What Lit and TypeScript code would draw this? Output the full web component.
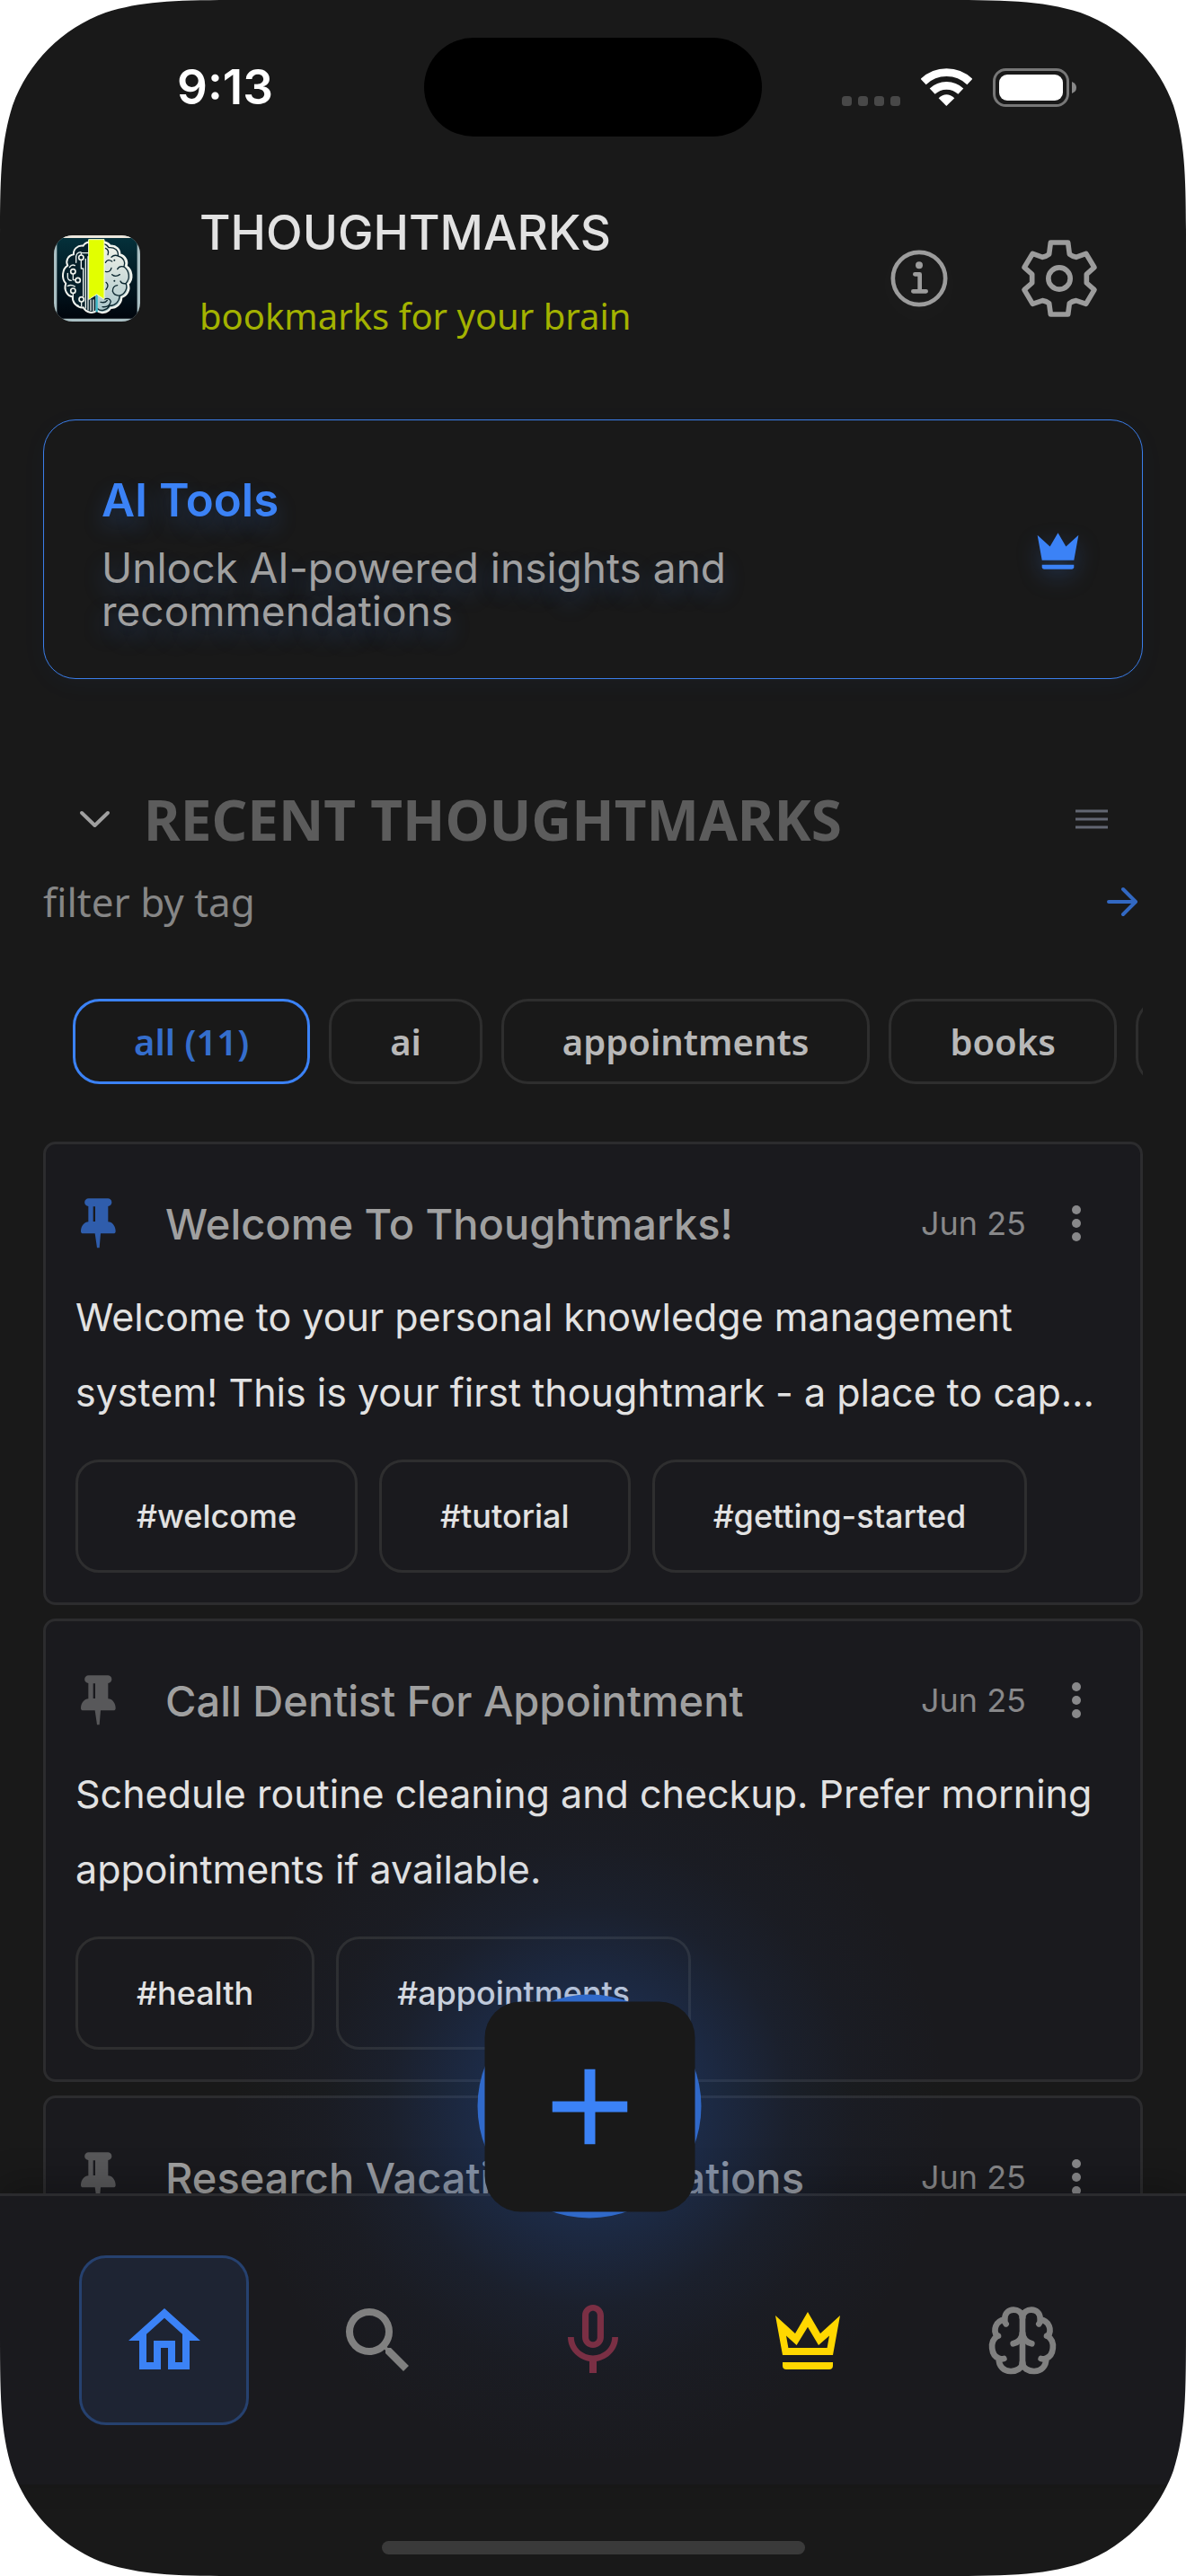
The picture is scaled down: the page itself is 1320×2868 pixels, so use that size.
import { LitElement, html, css, svg, nothing } from "lit";
import { customElement, property, state } from "lit/decorators.js";
import { classMap } from "lit/directives/class-map.js";

interface Thoughtmark {
  title: string;
  date: string;
  pinned: boolean;
  body?: string;
  tags?: string[];
}

const MARKS: Thoughtmark[] = [
  {
    title: "Welcome To Thoughtmarks!",
    date: "Jun 25",
    pinned: true,
    body: "Welcome to your personal knowledge management system! This is your first thoughtmark - a place to cap…",
    tags: ["#welcome", "#tutorial", "#getting-started"],
  },
  {
    title: "Call Dentist For Appointment",
    date: "Jun 25",
    pinned: false,
    body: "Schedule routine cleaning and checkup. Prefer morning appointments if available.",
    tags: ["#health", "#appointments"],
  },
  { title: "Research Vacation Destinations", date: "Jun 25", pinned: false },
];

const FILTERS = ["all (11)", "ai", "appointments", "books"];

const CROWN_BASE = svg`<path d="M19 19C19 19.6 18.6 20 18 20H6C5.4 20 5 19.6 5 19V18H19Z"/>`;

const NAV = [
  {
    id: "home",
    label: "Home",
    icon: svg`<path d="M12 5.69l5 4.5V18h-2v-6H9v6H7v-7.81l5-4.5M12 3L2 12h3v8h6v-6h2v6h6v-8h3L12 3z"/>`,
  },
  {
    id: "search",
    label: "Search",
    icon: svg`<path d="M15.5 14h-.79l-.28-.27A6.471 6.471 0 0 0 16 9.5 6.5 6.5 0 1 0 9.5 16c1.61 0 3.09-.59 4.23-1.57l.27.28v.79l5 4.99L20.49 19l-4.99-5zm-6 0C7.01 14 5 11.99 5 9.5S7.01 5 9.5 5 14 7.01 14 9.5 11.99 14 9.5 14z"/>`,
  },
  {
    id: "voice",
    label: "Voice",
    icon: svg`<path transform="translate(0 -1)" d="M12 15c1.66 0 2.99-1.34 2.99-3L15 6c0-1.66-1.34-3-3-3S9 4.34 9 6v6c0 1.66 1.34 3 3 3zm-1.2-9.1c0-.66.54-1.2 1.2-1.2.66 0 1.2.54 1.2 1.2l-.01 6.2c0 .66-.53 1.2-1.19 1.2-.66 0-1.2-.54-1.2-1.2V5.9zm6.5 6.1c0 3-2.54 5.1-5.3 5.1S6.7 15 6.7 12H5c0 3.41 2.72 6.23 6 6.72V22h2v-3.28c3.28-.48 6-3.3 6-6.72h-1.7z"/>`,
  },
  {
    id: "premium",
    label: "Premium",
    icon: svg`<path fill-rule="evenodd" d="M5 16L3 5L8.5 10L12 4L15.5 10L21 5L19 16ZM6 10.6L6.6 14H17.4L18 10.6L15 13.25L12 8.2L8.9 13.25Z"/>${CROWN_BASE}`,
  },
  {
    id: "brain",
    label: "Brain",
    icon: svg`<g transform="translate(12 12) scale(.0833) translate(-893 -197)" fill="none" stroke="currentColor" stroke-width="20" stroke-linecap="round" stroke-linejoin="round">
      <path d="M893 120V275"/>
      <path d="M893 120C890 85 834 84 834 124C834 132 833 136 838 141M834 126C802 132 794 162 808 182L812 181M808 182C782 200 788 246 814 256Q824 260 831 257M814 256C812 314 893 308 893 270M862 207Q890 200 893 172"/>
      <path transform="translate(1786 0) scale(-1 1)" d="M893 120C890 85 834 84 834 124C834 132 833 136 838 141M834 126C802 132 794 162 808 182L812 181M808 182C782 200 788 246 814 256Q824 260 831 257M814 256C812 314 893 308 893 270M862 207Q890 200 893 172"/>
    </g>`,
  },
];

@customElement("thought-card")
export class ThoughtCard extends LitElement {
  @property({ attribute: false }) mark!: Thoughtmark;

  static styles = css`
    :host {
      display: block;
      flex: none;
      box-sizing: border-box;
      border: 3px solid #2c2c2e;
      border-radius: 14px;
      background: #1a1a1e;
      padding: 33px;
      font-family: Inter, "Liberation Sans", sans-serif;
      color: #e2e2e2;
    }
    button {
      border: 0;
      padding: 0;
      background: none;
      display: grid;
      place-items: center;
      cursor: pointer;
    }
    .head {
      display: flex;
      align-items: center;
      height: 110px;
    }
    .pin {
      width: 51px;
      margin-right: 49px;
      color: #58585a;
    }
    .pin.on {
      color: #2f5dac;
    }
    h3 {
      flex: 1;
      margin: 0;
      font-size: 47px;
      font-weight: 500;
      color: #a0a0a0;
      white-space: nowrap;
    }
    time {
      font-size: 36px;
      color: #88888a;
    }
    .more {
      width: 76px;
      height: 76px;
      margin-left: 18px;
      color: #88888a;
    }
    p {
      margin: 7px 0 33px;
      font-size: 43px;
      line-height: 84px;
    }
    ul {
      display: flex;
      gap: 24px;
      margin: 0;
      padding: 0;
      list-style: none;
    }
    li {
      border: 3px solid #2e2e2f;
      border-radius: 26px;
      padding: 35px 65px;
      font-size: 36px;
      font-weight: 500;
      line-height: 50px;
    }
  `;

  render() {
    const { title, date, pinned, body, tags } = this.mark;
    return html`
      <div class="head">
        <button class=${classMap({ pin: true, on: pinned })} aria-label="Pin">
          <svg width="39" height="56" viewBox="90 76 117 168" fill="currentColor">
            <path
              d="M116 77H179A13 13 0 0 1 181 103V155C195 155 206 170 206 186Q206 194 198 194H156L152 242H144L137 194H98Q90 194 90 186C90 168 103 155 115 155V103A13 13 0 0 1 116 77ZM131 104V154H138V104Z"
              fill-rule="evenodd"
            />
          </svg>
        </button>
        <h3>${title}</h3>
        <time>${date}</time>
        <button class="more" aria-label="More">
          <svg width="12" height="42" viewBox="0 0 12 42" fill="currentColor">
            <circle cx="6" cy="6" r="5" />
            <circle cx="6" cy="21" r="5" />
            <circle cx="6" cy="36" r="5" />
          </svg>
        </button>
      </div>
      ${body ? html`<p>${body}</p>` : nothing}
      ${tags ? html`<ul>${tags.map((t) => html`<li>${t}</li>`)}</ul>` : nothing}
    `;
  }
}

@customElement("app-root")
export class AppRoot extends LitElement {
  @state() private tab = "home";
  @state() private filter = FILTERS[0];

  static styles = css`
    :host {
      display: block;
      font-family: Inter, "Liberation Sans", sans-serif;
    }
    button {
      border: 0;
      padding: 0;
      background: none;
      font: inherit;
      color: inherit;
      display: grid;
      place-items: center;
      cursor: pointer;
    }
    .screen {
      position: relative;
      display: flex;
      flex-direction: column;
      height: 100vh;
      overflow: hidden;
      background: #191919;
    }
    .corner {
      position: absolute;
      z-index: 5;
      fill: #fff;
      pointer-events: none;
    }
    .tl { top: 0; left: 0; }
    .tr { top: 0; right: 0; transform: scaleX(-1); }
    .bl { bottom: 0; left: 0; transform: scaleY(-1); }
    .br { bottom: 0; right: 0; transform: scale(-1); }

    .status {
      flex: none;
      display: grid;
      grid-template-columns: minmax(0, 275fr) auto minmax(0, 350fr);
      align-items: center;
      padding: 42px 122px 0 197px;
      color: #fff;
    }
    .clock {
      font-size: 53px;
      font-weight: 600;
    }
    .island {
      width: 376px;
      height: 110px;
      border-radius: 55px;
      background: #000;
    }
    .signals {
      display: flex;
      justify-content: flex-end;
      gap: 23px;
    }

    .brand {
      flex: none;
      display: flex;
      align-items: center;
      padding: 77px 93px 76px 60px;
      color: #9c9c9c;
    }
    .names {
      flex: 1;
      display: flex;
      flex-direction: column;
      gap: 24px;
      margin-left: 66px;
    }
    h1 {
      margin: 0;
      font-size: 53px;
      font-weight: 500;
      line-height: 60px;
      color: #e2e2e2;
    }
    .tagline {
      font-family: "Noto Sans", sans-serif;
      font-size: 40px;
      line-height: 78px;
      color: #a3b200;
    }
    .brand button {
      width: 96px;
      height: 96px;
    }
    .actions {
      display: flex;
      gap: 60px;
    }
    .about {
      filter: drop-shadow(0 6px 16px rgba(255, 255, 255, 0.06));
    }

    .ai {
      flex: none;
      display: flex;
      align-items: center;
      justify-content: space-between;
      margin: 0 48px;
      padding: 55px 63px 51px 64px;
      border: 1px solid #3b7eea;
      border-radius: 36px;
      box-shadow: 0 6px 30px rgba(59, 130, 246, 0.04);
      color: #3b82f6;
      text-decoration: none;
    }
    .ai h2 {
      margin: 0 0 17px;
      font-size: 51px;
      font-weight: 600;
      line-height: 68px;
      text-shadow: 0 12px 24px rgba(59, 130, 246, 0.25);
    }
    .ai p {
      margin: 0;
      font-size: 46px;
      line-height: 48px;
      color: #a0a0a0;
      text-shadow: 0 12px 24px rgba(59, 130, 246, 0.25);
    }
    .ai svg {
      flex: none;
      filter: drop-shadow(0 8px 12px rgba(59, 130, 246, 0.25));
    }

    .section {
      flex: none;
      display: flex;
      align-items: center;
      gap: 34px;
      margin-top: 116px;
      padding: 0 87px 0 85px;
      color: #a0a0a0;
    }
    .section h2 {
      flex: 1;
      margin: 0;
      font-family: "Noto Sans", sans-serif;
      font-size: 62px;
      font-weight: 700;
      line-height: 80px;
      color: #5c5c5c;
    }
    .list-toggle {
      color: #626672;
    }
    .filter {
      flex: none;
      display: flex;
      align-items: center;
      justify-content: space-between;
      margin-top: 22px;
      padding: 0 51px 0 48px;
      font-family: "Noto Sans", sans-serif;
      font-size: 44px;
      line-height: 60px;
      color: #868686;
    }
    .filter button {
      color: #3268c2;
    }
    .chips {
      flex: none;
      display: flex;
      gap: 21px;
      margin: 78px 48px 64px;
      padding-left: 33px;
      overflow: hidden;
      font-family: "Noto Sans", sans-serif;
      font-size: 40px;
      font-weight: 600;
      line-height: 55px;
      color: #b8b8b8;
    }
    .chips button {
      flex: none;
      border: 3px solid #2e2e2e;
      border-radius: 30px;
      padding: 17px 65px;
    }
    .chips .on {
      border-color: #3b82f6;
      color: #356ecd;
    }
    .cards {
      flex: 1;
      min-height: 0;
      overflow: hidden;
      display: flex;
      flex-direction: column;
      gap: 15px;
      padding: 0 48px;
    }

    .dock {
      flex: none;
      position: relative;
      border-top: 3px solid #2b2b2e;
      background: #1a1a1e;
      box-shadow: 0 -12px 36px rgba(0, 0, 0, 0.22);
    }
    .tabs {
      position: relative;
      z-index: 2;
      display: flex;
      justify-content: space-between;
      padding: 66px 88px;
      color: #808080;
    }
    .tabs button {
      box-sizing: border-box;
      width: 189px;
      height: 189px;
      border: 3px solid transparent;
      border-radius: 30px;
    }
    .tabs .on {
      border-color: #26416f;
      background: #1e2433;
      color: #3b82f6;
    }
    .voice {
      color: #7a2f44;
    }
    .premium {
      color: #ffd700;
    }
    .glow {
      position: absolute;
      top: -100px;
      left: calc(50% - 4px);
      width: 800px;
      height: 800px;
      transform: translate(-50%, -50%);
      pointer-events: none;
      background: radial-gradient(
        circle closest-side,
        rgba(35, 92, 190, 0.26) 30%,
        rgba(35, 92, 190, 0.18) 42%,
        rgba(35, 92, 190, 0.09) 56%,
        rgba(35, 92, 190, 0.03) 74%,
        rgba(35, 92, 190, 0) 100%
      );
    }
    .add {
      position: absolute;
      z-index: 3;
      top: -100px;
      left: calc(50% - 4px);
      width: 249px;
      height: 249px;
      transform: translate(-50%, -50%);
      border-radius: 50%;
      background: #3069c9;
      color: #3b82f6;
    }
    .tile {
      display: grid;
      place-items: center;
      width: 234px;
      height: 234px;
      border-radius: 40px;
      background: #191919;
    }
    .indicator {
      flex: none;
      padding: 63px 0 24px;
    }
    .bar {
      width: 471px;
      height: 15px;
      margin: 0 auto;
      border-radius: 8px;
      background: #3a3a3a;
    }
  `;

  private corner(where: string) {
    return html`<svg class="corner ${where}" width="284" height="284" viewBox="0 0 284 284">
      <path d="M0 0H284C202 0 162 0 117.5 14C69.3 31.4 31.4 69.3 14 117.5C0 162 0 202 0 284Z" />
    </svg>`;
  }

  private logo() {
    return html`<svg width="96" height="96" viewBox="60 69 288 288" role="img" aria-label="Thoughtmarks">
      <defs>
        <clipPath id="tile"><rect x="60" y="69" width="288" height="288" rx="62" /></clipPath>
        <linearGradient id="sea" x1="0" y1="0" x2="0" y2="1">
          <stop offset="0" stop-color="#04303a" />
          <stop offset=".6" stop-color="#021620" />
          <stop offset="1" stop-color="#00050c" />
        </linearGradient>
        <linearGradient id="cloud" x1="0" y1="0" x2="0" y2="1">
          <stop offset="0" stop-color="#f4f4ea" />
          <stop offset="1" stop-color="#a9c6ca" />
        </linearGradient>
      </defs>
      <g clip-path="url(#tile)" fill="none" stroke-linecap="round" stroke-linejoin="round">
        <rect x="60" y="69" width="288" height="288" fill="#a9bfc3" />
        <rect x="60" y="69" width="288" height="9" fill="#ece6dc" />
        <rect x="70" y="78" width="268" height="269" rx="14" fill="url(#sea)" />
        <path
          d="M203 96C190 88 165 90 158 104C138 102 124 116 126 133C106 136 98 156 106 170C88 180 84 214 100 230C92 250 104 272 122 274C122 296 140 312 158 310C168 328 192 332 203 320Z"
          fill="#06202a" stroke="#f2f4ee" stroke-width="6"
        />
        <path
          d="M203 96C216 86 240 90 248 104C268 102 282 116 280 133C300 138 308 156 302 172C322 184 326 216 308 232C316 250 304 272 286 276C286 298 268 312 250 312C238 330 214 332 203 320Z"
          fill="url(#cloud)" stroke="#f2f4ee" stroke-width="6"
        />
        <path
          d="M203 102C216 92 236 96 243 110C264 108 276 120 274 138C294 144 300 160 294 174C312 188 316 212 300 230C308 246 296 266 280 270C278 292 264 304 246 304C236 320 216 324 206 314M232 112Q246 118 240 134M274 138Q262 132 252 142M232 160Q240 146 254 156M294 174Q278 170 272 182M232 190Q248 194 252 178M280 200Q266 210 254 200M300 230Q286 232 282 222M234 226Q246 236 234 250M280 270Q262 272 256 256Q256 238 272 236M216 292Q232 296 238 286M222 308Q246 310 250 290Q246 276 228 282"
          stroke="#0b2730" stroke-width="4"
        />
        <circle cx="262" cy="152" r="3" fill="#0b2730" />
        <circle cx="262" cy="221" r="3" fill="#0b2730" />
        <path
          d="M151 152V180H158V272M151 134V128H174M134 160V140Q136 126 150 125M124 199V218H132M106 196V208Q106 220 118 220M124 262V286Q126 300 142 304M152 292V306M166 148V312M174 140V318M183 285V320M192 285V322M106 238Q118 232 130 240M112 176Q120 164 130 170"
          stroke="#e8efec" stroke-width="4"
        />
        <g stroke="#f2f4ee" stroke-width="5" fill="#06202a">
          <circle cx="151" cy="143" r="8" />
          <circle cx="124" cy="190" r="8" />
          <circle cx="140" cy="219" r="8" />
          <circle cx="124" cy="254" r="8" />
          <circle cx="152" cy="283" r="8" />
        </g>
        <path d="M203 270V322" stroke="#36b5c6" stroke-width="7" />
        <path d="M177 83H228V283L203 266L177 283Z" fill="#e2ff00" stroke="#f8ffd8" stroke-width="3" />
      </g>
    </svg>`;
  }

  render() {
    return html`
      <div class="screen">
        ${["tl", "tr", "bl", "br"].map((c) => this.corner(c))}

        <div class="status">
          <span class="clock">9:13</span>
          <span class="island"></span>
          <span class="signals">
            <svg width="65" height="43" viewBox="0 0 65 43" fill="#484848">
              ${[0, 18, 36, 54].map((x) => svg`<rect x=${x} y="31" width="11" height="11" rx="3.5"/>`)}
            </svg>
            <svg width="57" height="43" viewBox="375 105 171 129" fill="none" stroke="#fff" stroke-width="26">
              <path d="M383 150A112 112 0 0 1 538 150" />
              <path d="M413 182A69 69 0 0 1 508 182" />
              <path d="M460 231L434 205Q460 181 487 205Z" fill="#fff" stroke="none" />
            </svg>
            <svg width="93" height="43" viewBox="0 0 93 43">
              <rect x="1.5" y="1.5" width="82" height="40" rx="13" fill="none" stroke="#777" stroke-width="3" />
              <rect x="7" y="7" width="71" height="29" rx="9" fill="#fff" />
              <path d="M88 15Q93 17 93 21.500T88 28Z" fill="#888" />
            </svg>
          </span>
        </div>

        <header class="brand">
          ${this.logo()}
          <div class="names">
            <h1>THOUGHTMARKS</h1>
            <div class="tagline">bookmarks for your brain</div>
          </div>
          <div class="actions">
            <button class="about" aria-label="About">
              <svg width="64" height="64" viewBox="274 715 192 192" fill="none" stroke="currentColor" stroke-width="14" stroke-linecap="round" stroke-linejoin="round">
                <circle cx="370" cy="811" r="87.500" />
                <circle cx="370" cy="767" r="12" fill="currentColor" stroke="none" />
                <path d="M356 797H372V854M350 854H393" />
              </svg>
            </button>
            <button aria-label="Settings">
              <svg width="86" height="86" viewBox="708 683 258 258" fill="none" stroke="currentColor" stroke-width="17" stroke-linejoin="round">
                <path d="M808 692H866L871 731Q880 738 893 741L926 729L954 775L928 798V827L954 850L926 897L893 886Q880 888 871 895L866 932H808L803 895Q794 888 781 886L748 897L720 850L746 827V798L720 775L748 729L781 741Q794 738 803 731Z" />
                <circle cx="837" cy="812" r="36.500" />
              </svg>
            </button>
          </div>
        </header>

        <a class="ai" href="#ai-tools">
          <div>
            <h2>AI Tools</h2>
            <p>Unlock AI-powered insights and recommendations</p>
          </div>
          <svg width="61" height="61" viewBox="0 0 24 24" fill="currentColor">
            <path d="M5 16L3 5L8.5 10L12 4L15.5 10L21 5L19 16Z" />
            ${CROWN_BASE}
          </svg>
        </a>

        <div class="section">
          <button aria-label="Collapse">
            <svg width="41" height="24" viewBox="0 0 41 24" fill="none" stroke="currentColor" stroke-width="4" stroke-linecap="round" stroke-linejoin="round">
              <path d="M6 5L20.500 19L35 5" />
            </svg>
          </button>
          <h2>RECENT THOUGHTMARKS</h2>
          <button class="list-toggle" aria-label="List view">
            <svg width="36" height="24" viewBox="0 0 36 24" fill="currentColor">
              <path d="M0 1.500H36V4.500H0ZM0 10.500H36V13.500H0ZM0 19.500H36V22.500H0Z" />
            </svg>
          </button>
        </div>

        <div class="filter">
          <span>filter by tag</span>
          <button aria-label="All tags">
            <svg width="38" height="36" viewBox="0 0 38 36" fill="none" stroke="currentColor" stroke-width="4" stroke-linecap="round" stroke-linejoin="round">
              <path d="M3 18H33M19 4L33 18L19 32" />
            </svg>
          </button>
        </div>

        <div class="chips">
          ${FILTERS.map(
            (f) => html`<button
              class=${classMap({ on: f === this.filter })}
              @click=${() => (this.filter = f)}
            >${f}</button>`
          )}
          <button aria-label="More tags"></button>
        </div>

        <main class="cards">
          ${MARKS.map((m) => html`<thought-card .mark=${m}></thought-card>`)}
        </main>

        <div class="dock">
          <div class="glow"></div>
          <nav class="tabs">
            ${NAV.map(
              (n) => html`<button
                class=${classMap({ [n.id]: true, on: n.id === this.tab })}
                aria-label=${n.label}
                @click=${() => (this.tab = n.id)}
              >
                <svg width="96" height="96" viewBox="0 0 24 24" fill="currentColor">${n.icon}</svg>
              </button>`
            )}
          </nav>
          <button class="add" aria-label="Add thoughtmark">
            <span class="tile">
              <svg width="84" height="84" viewBox="0 0 84 84" stroke="currentColor" stroke-width="12">
                <path d="M42 0V84M0 42H84" />
              </svg>
            </span>
          </button>
        </div>
        <div class="indicator"><div class="bar"></div></div>
      </div>
    `;
  }
}
